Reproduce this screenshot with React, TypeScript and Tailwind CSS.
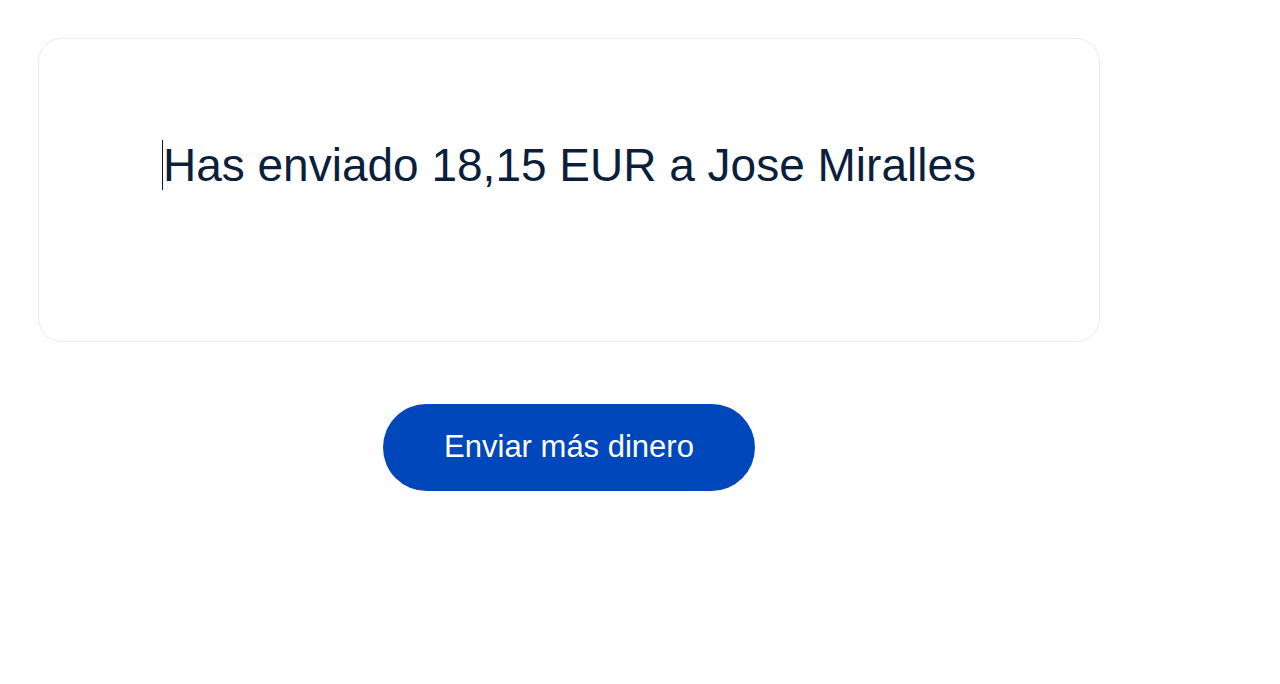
export default function App() {
  return (
    <div className="w-[1280px] h-[684px] bg-white" style={{ fontFamily: '"Liberation Sans", Arial, sans-serif' }}>
      <div className="pt-[38px] pl-[38px] w-[1100px]">
        <div className="h-[304px] rounded-[24px] border border-[#ececec] flex justify-center pt-[101px] box-border">
          <div className="flex items-start h-[50px]">
            <span className="w-px h-[50px] bg-[#0b1a33]" />
            <span className="text-[46px] leading-[50px] text-[#0b1f3d]">Has enviado 18,15 EUR a Jose Miralles</span>
          </div>
        </div>
        <div className="flex justify-center mt-[62px]">
          <button className="w-[372px] h-[87px] rounded-full bg-[#0047bb] text-white text-[31px]">Enviar más dinero</button>
        </div>
      </div>
    </div>
  );
}
